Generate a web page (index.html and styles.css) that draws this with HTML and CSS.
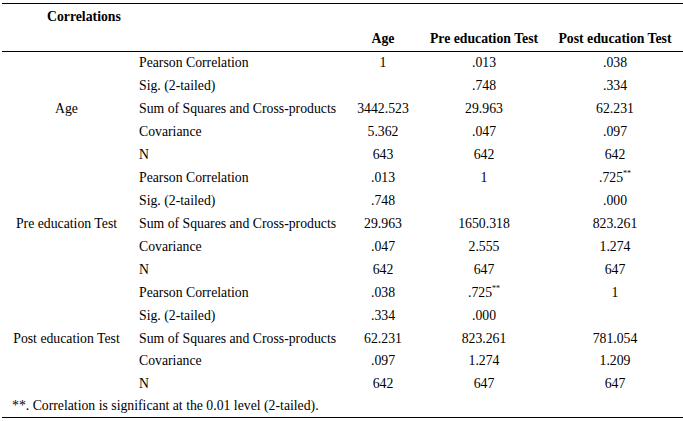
FILE: index.html
```html
<!DOCTYPE html>
<html>
<head>
<meta charset="utf-8">
<link rel="stylesheet" href="styles.css">
</head>
<body>
<table class="corr">
  <colgroup>
    <col class="c-var">
    <col class="c-stat">
    <col class="c-age">
    <col class="c-pre">
    <col class="c-post">
  </colgroup>
  <thead>
    <tr class="title-row">
      <th class="title" colspan="5">Correlations</th>
    </tr>
    <tr class="head-row">
      <th></th>
      <th></th>
      <th>Age</th>
      <th>Pre education Test</th>
      <th>Post education Test</th>
    </tr>
  </thead>
  <tbody>
    <tr>
      <td class="var" rowspan="5">Age</td>
      <td class="stat">Pearson Correlation</td>
      <td>1</td><td>.013</td><td>.038</td>
    </tr>
    <tr><td class="stat">Sig. (2-tailed)</td><td></td><td>.748</td><td>.334</td></tr>
    <tr><td class="stat">Sum of Squares and Cross-products</td><td>3442.523</td><td>29.963</td><td>62.231</td></tr>
    <tr><td class="stat">Covariance</td><td>5.362</td><td>.047</td><td>.097</td></tr>
    <tr><td class="stat">N</td><td>643</td><td>642</td><td>642</td></tr>

    <tr>
      <td class="var" rowspan="5">Pre education Test</td>
      <td class="stat">Pearson Correlation</td>
      <td>.013</td><td>1</td><td>.725<sup>**</sup></td>
    </tr>
    <tr><td class="stat">Sig. (2-tailed)</td><td>.748</td><td></td><td>.000</td></tr>
    <tr><td class="stat">Sum of Squares and Cross-products</td><td>29.963</td><td>1650.318</td><td>823.261</td></tr>
    <tr><td class="stat">Covariance</td><td>.047</td><td>2.555</td><td>1.274</td></tr>
    <tr><td class="stat">N</td><td>642</td><td>647</td><td>647</td></tr>

    <tr>
      <td class="var" rowspan="5">Post education Test</td>
      <td class="stat">Pearson Correlation</td>
      <td>.038</td><td>.725<sup>**</sup></td><td>1</td>
    </tr>
    <tr><td class="stat">Sig. (2-tailed)</td><td>.334</td><td>.000</td><td></td></tr>
    <tr><td class="stat">Sum of Squares and Cross-products</td><td>62.231</td><td>823.261</td><td>781.054</td></tr>
    <tr><td class="stat">Covariance</td><td>.097</td><td>1.274</td><td>1.209</td></tr>
    <tr><td class="stat">N</td><td>642</td><td>647</td><td>647</td></tr>
  </tbody>
  <tfoot>
    <tr class="foot-row">
      <td class="note" colspan="5">**. Correlation is significant at the 0.01 level (2-tailed).</td>
    </tr>
  </tfoot>
</table>
</body>
</html>
```

FILE: styles.css
```css
html, body {
  margin: 0;
  padding: 0;
  background: #ffffff;
}

body {
  padding: 3px 0 0 2px;
  font-family: "Liberation Serif", "Times New Roman", serif;
  font-size: 13.75px;
  color: #000000;
}

.corr {
  border-collapse: separate;
  border-spacing: 0;
  table-layout: fixed;
  width: 681px;
  border-top: 1px solid #000;
  border-bottom: 1px solid #000;
}

.c-var { width: 129px; }
.c-stat { width: 214px; }
.c-age { width: 76px; }
.c-pre { width: 126px; }
.c-post { width: 136px; }

.corr th,
.corr td {
  padding: 0;
  text-align: center;
  vertical-align: middle;
  white-space: nowrap;
  font-weight: normal;
  font-family: inherit;
  font-size: 13.75px;
  line-height: 16px;
  box-sizing: content-box;
}

.title-row th {
  height: 25px;
}

.corr th.title {
  text-align: left;
  padding-left: 45px;
  font-weight: bold;
}

.head-row th {
  height: 20px;
  padding-bottom: 2px;
  font-weight: bold;
  border-bottom: 1px solid #000;
}

.corr tbody td {
  height: 22.93px;
}

.corr td.stat {
  text-align: left;
  padding-left: 8px;
}

.corr sup {
  font-size: 8px;
  vertical-align: top;
  line-height: 1;
}

.foot-row td {
  height: 21px;
}

.corr td.note {
  text-align: left;
  padding-left: 10px;
}
```
